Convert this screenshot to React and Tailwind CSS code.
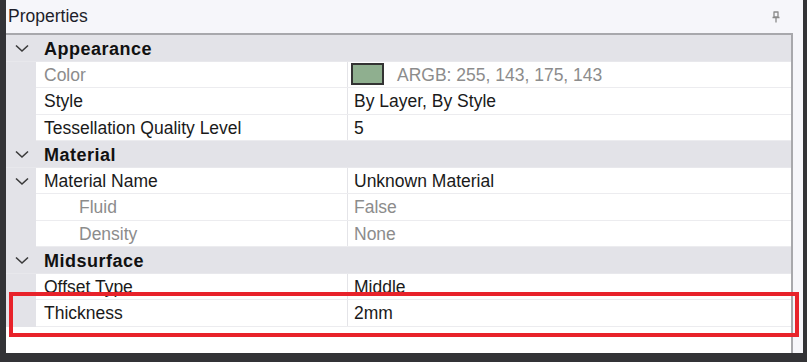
import React from 'react';

const font = { fontFamily: '"Liberation Sans", Arial, sans-serif' };

function Chevron() {
    return (
        <svg width="14" height="9" viewBox="0 0 14 9" className="block">
            <polyline points="1,1.5 7,7 13,1.5" fill="none" stroke="#3a3a3a" strokeWidth="1.6" />
        </svg>
    );
}

function Category({ label }) {
    return (
        <div className="flex h-[26.5px] items-center bg-[#e3e3e8] border-b border-[#e8e8ec] pt-[2px]">
            <div className="w-[30px] flex justify-center pl-[2px]"><Chevron /></div>
            <div className="pl-[8px] font-bold text-[18px] tracking-[0.5px] text-[#111]">{label}</div>
        </div>
    );
}

function Row({ name, value, dim, indent, expand, swatch }) {
    const color = dim ? 'text-[#8c8c8c]' : 'text-[#1a1a1a]';
    return (
        <div className="flex h-[26.5px] bg-[#e3e3e8]">
            <div className="w-[30px] flex items-center justify-center pl-[2px] pt-[2px]">{expand && <Chevron />}</div>
            <div className="flex flex-1 bg-white border-b border-[#ececef]">
                <div className={`w-[312px] flex items-center pt-[2px] border-r border-[#e4e4e8] ${indent ? 'pl-[43px]' : 'pl-[8px]'} ${color}`}>{name}</div>
                <div className={`flex-1 flex items-center pl-[3px] pt-[2px] gap-[13px] ${color}`}>
                    {swatch && <span className="w-[33px] h-[22px] -mt-[2px] bg-[#8faf8f] border-2 border-[#333]" />}
                    <span className={swatch ? '' : 'pl-[3px]'}>{value}</span>
                </div>
            </div>
        </div>
    );
}

export default function App() {
    return (
        <div className="w-[807px] h-[362px] bg-[#333336] pl-[6px] pr-[4px] pb-[9px] text-[17.5px] leading-none" style={font}>
            <div className="relative h-full bg-[#f6f6fa] flex flex-col">
                {/* Title */}
                <div className="h-[33px] flex items-center justify-between pl-[2px] pr-[22px] text-[#1e1e2a]">
                    <span>Properties</span>
                    <svg width="10" height="12" viewBox="0 0 10 12">
                        <path d="M2.5 1h5M3 1v5h4V1M1.5 6.5h7M5 6.5V11.5" fill="none" stroke="#8a8a8a" strokeWidth="1.3" />
                    </svg>
                </div>

                {/* Grid */}
                <div className="flex-1 bg-white mr-[10px] border-t-2 border-r-2 border-[#a8a8ac]">
                    <Category label="Appearance" />
                    <Row name="Color" value="ARGB: 255, 143, 175, 143" dim swatch />
                    <Row name="Style" value="By Layer, By Style" />
                    <Row name="Tessellation Quality Level" value="5" />
                    <Category label="Material" />
                    <Row name="Material Name" value="Unknown Material" expand />
                    <Row name="Fluid" value="False" dim indent />
                    <Row name="Density" value="None" dim indent />
                    <Category label="Midsurface" />
                    <Row name="Offset Type" value="Middle" />
                    <Row name="Thickness" value="2mm" />
                </div>

                {/* highlight annotation */}
                <div className="absolute left-[3px] top-[292px] w-[790px] h-[45px] border-[4.5px] border-[#e8222a] pointer-events-none" />
            </div>
        </div>
    );
}
